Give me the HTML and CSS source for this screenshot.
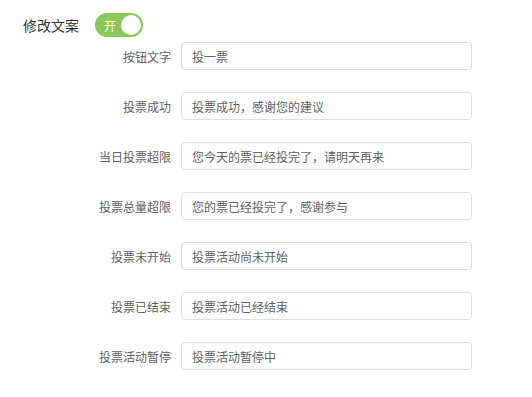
FILE: index.html
```html
<!DOCTYPE html>
<html lang="zh-CN">
<head>
    <meta charset="UTF-8">
    <meta name="viewport" content="width=device-width, initial-scale=1.0">
    <title>修改文案</title>
    <link rel="stylesheet" href="styles.css">
</head>
<body>
    <div class="settings">
        <div class="switch-row">
            <span class="switch-label">修改文案</span>
            <span class="switch is-on">
                <span class="switch-text">开</span>
                <span class="switch-knob"></span>
            </span>
        </div>
        <form class="copy-form">
            <div class="form-item">
                <label for="btnText">按钮文字</label>
                <input type="text" id="btnText" value="投一票">
            </div>
            <div class="form-item">
                <label for="voteOk">投票成功</label>
                <input type="text" id="voteOk" value="投票成功，感谢您的建议">
            </div>
            <div class="form-item">
                <label for="dayLimit">当日投票超限</label>
                <input type="text" id="dayLimit" value="您今天的票已经投完了，请明天再来">
            </div>
            <div class="form-item">
                <label for="totalLimit">投票总量超限</label>
                <input type="text" id="totalLimit" value="您的票已经投完了，感谢参与">
            </div>
            <div class="form-item">
                <label for="notStarted">投票未开始</label>
                <input type="text" id="notStarted" value="投票活动尚未开始">
            </div>
            <div class="form-item">
                <label for="ended">投票已结束</label>
                <input type="text" id="ended" value="投票活动已经结束">
            </div>
            <div class="form-item">
                <label for="paused">投票活动暂停</label>
                <input type="text" id="paused" value="投票活动暂停中">
            </div>
        </form>
    </div>
</body>
</html>
```

FILE: styles.css
```css
body {
    margin: 0;
    background: #fff;
    font-family: "Noto Sans CJK SC", "Noto Sans", sans-serif;
}
.settings {
    padding: 13px 0 0 23px;
}
.switch-row {
    display: flex;
    align-items: center;
    height: 24px;
}
.switch-label {
    width: 72px;
    font-size: 14px;
    color: #333;
}
.switch {
    position: relative;
    display: inline-flex;
    align-items: center;
    width: 48px;
    height: 24px;
    border-radius: 12px;
    background: #8cc75a;
    box-sizing: border-box;
}
.switch-text {
    margin-left: 9px;
    font-size: 12px;
    color: #fff;
}
.switch-knob {
    position: absolute;
    right: 2px;
    top: 2px;
    width: 20px;
    height: 20px;
    border-radius: 50%;
    background: #fff;
}
.copy-form {
    margin-top: 5px;
    display: flex;
    flex-direction: column;
    gap: 22px;
}
.form-item {
    display: flex;
    align-items: center;
}
.form-item label {
    width: 148px;
    padding-right: 10px;
    text-align: right;
    font-size: 12px;
    color: #606266;
}
.form-item input {
    width: 291px;
    height: 28px;
    box-sizing: border-box;
    padding: 0 10px;
    border: 1px solid #dcdfe6;
    border-radius: 4px;
    font-family: inherit;
    font-size: 12px;
    color: #606266;
    outline: none;
}
```
